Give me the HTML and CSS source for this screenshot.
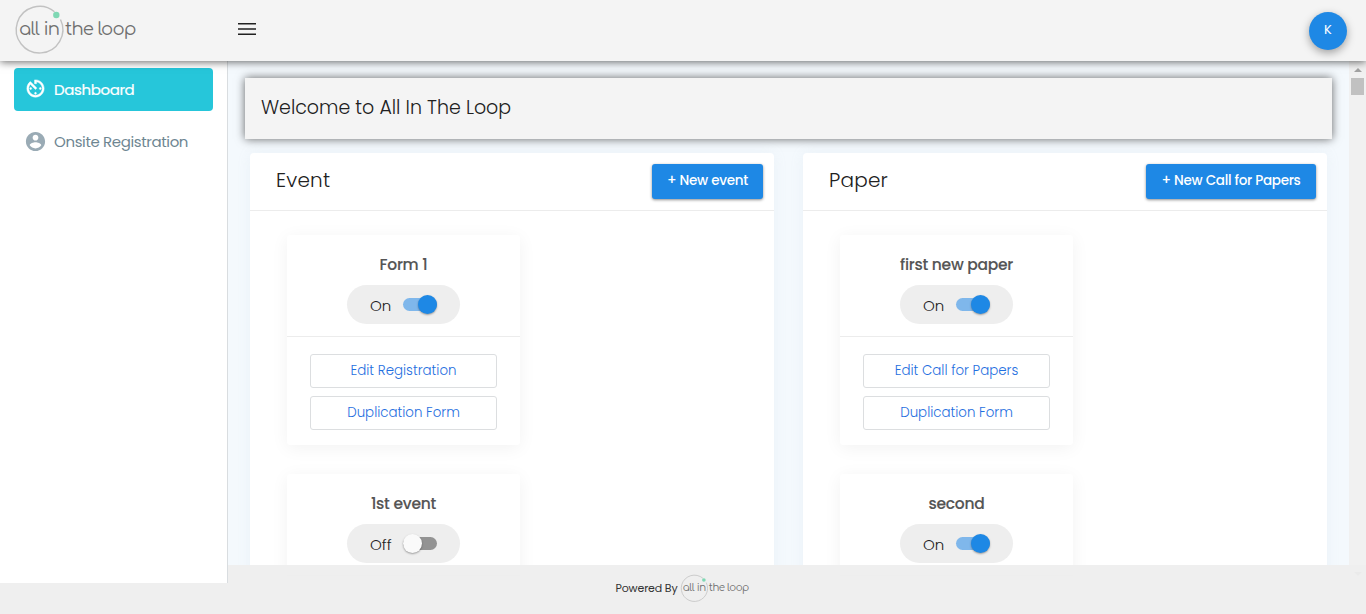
FILE: index.html
```html
<!DOCTYPE html>
<html lang="en">
<head>
<meta charset="utf-8">
<title>All In The Loop</title>
<link rel="stylesheet" href="styles.css">
</head>
<body>
<svg class="defs" width="0" height="0">
  <symbol id="logo" viewBox="0 0 124 50" overflow="visible">
    <path d="M40.500 6.800A23.300 23.300 0 1 0 46.500 14.500" fill="none" stroke="#c2c2c2" stroke-width="1.400"/>
    <circle cx="42.300" cy="10" r="3.200" fill="#7fd8b4"/>
    <g class="logo-text">
      <text x="5" y="30" textLength="41">all in</text>
      <text x="51" y="30" textLength="71.500">the loop</text>
    </g>
  </symbol>
</svg>
<div class="app">
  <header class="topbar">
    <svg class="logo"><use href="#logo"/></svg>
    <svg class="menu" viewBox="0 0 18 12"><path d="M0 .75h18M0 6h18M0 11.250h18"/></svg>
    <div class="avatar">K</div>
  </header>
  <div class="body">
    <nav class="sidebar">
      <a class="nav active">
        <svg viewBox="0 0 24 24"><path d="M11 3v4h2V5.080c3.390.49 6 3.390 6 6.920 0 3.870-3.130 7-7 7s-7-3.130-7-7c0-1.680.59-3.220 1.580-4.420L12 13l1.410-1.410-6.800-6.800v.02C4.420 6.450 3 9.050 3 12c0 4.970 4.020 9 9 9 4.970 0 9-4.030 9-9s-4.030-9-9-9h-1zm7 9c0-.55-.45-1-1-1s-1 .45-1 1 .45 1 1 1 1-.45 1-1zM6 12c0 .55.45 1 1 1s1-.45 1-1-.45-1-1-1-1 .45-1 1zm5 5c0 .55.450 1 1 1s1-.45 1-1-.45-1-1-1-1 .45-1 1z"/></svg>
        <span>Dashboard</span></a>
      <a class="nav">
        <svg viewBox="0 0 24 24"><path d="M12 2C6.480 2 2 6.480 2 12s4.480 10 10 10 10-4.480 10-10S17.520 2 12 2zm0 3c1.660 0 3 1.340 3 3s-1.340 3-3 3-3-1.340-3-3 1.340-3 3-3zm0 14.200c-2.500 0-4.710-1.280-6-3.220.03-1.990 4-3.080 6-3.080 1.990 0 5.970 1.090 6 3.080-1.290 1.940-3.500 3.220-6 3.220z"/></svg>
        <span>Onsite Registration</span></a>
    </nav>
    <main class="content">
      <h1 class="welcome"><span>Welcome to All In The Loop</span></h1>
      <div class="panels">
        <section class="panel">
          <div class="panel-head"><h2>Event</h2><button class="primary new-event">+ New event</button></div>
          <div class="cards">
            <article class="card">
              <div class="card-top"><h3>Form 1</h3><div class="pill"><span>On</span><i class="switch on"></i></div></div>
              <div class="actions"><button>Edit Registration</button><button>Duplication Form</button></div>
            </article>
            <article class="card">
              <div class="card-top"><h3>1st event</h3><div class="pill"><span>Off</span><i class="switch"></i></div></div>
              <div class="actions"></div>
            </article>
          </div>
        </section>
        <section class="panel">
          <div class="panel-head"><h2>Paper</h2><button class="primary new-paper">+ New Call for Papers</button></div>
          <div class="cards">
            <article class="card">
              <div class="card-top"><h3>first new paper</h3><div class="pill"><span>On</span><i class="switch on"></i></div></div>
              <div class="actions"><button>Edit Call for Papers</button><button>Duplication Form</button></div>
            </article>
            <article class="card">
              <div class="card-top"><h3>second</h3><div class="pill"><span>On</span><i class="switch on"></i></div></div>
              <div class="actions"></div>
            </article>
          </div>
        </section>
      </div>
    </main>
    <div class="scrollbar"><i class="up"></i><i class="thumb"></i><i class="down"></i></div>
  </div>
  <footer class="footer"><span>Powered By</span><svg class="logo-small"><use href="#logo"/></svg></footer>
</div>
</body>
</html>
```

FILE: styles.css
```css
* { box-sizing: border-box; }
body { margin: 0; font-family: Poppins, Inter, "Open Sans", sans-serif; font-weight: 300; color: #212121; background: #eee; overflow: hidden; }
h1, h2, h3 { margin: 0; font-weight: 300; }
span, h2, h3 { white-space: nowrap; }
button { font: inherit; display: flex; align-items: center; justify-content: center; padding: 0; white-space: nowrap; }
.defs { position: absolute; }
.app { position: relative; height: 614px; overflow: hidden; }

.topbar { position: relative; z-index: 5; height: 61px; background: #f4f4f4; box-shadow: 0 1px 8px rgba(0,0,0,.6); display: flex; align-items: center; padding: 0 19px 0 14px; }
.logo { width: 124px; height: 50px; margin-bottom: 2px; overflow: visible; }
.logo-text { font-family: Comfortaa, Lato, sans-serif; font-size: 18px; font-weight: 400; fill: #707070; }
.menu { width: 18px; height: 12px; margin-left: 100px; margin-bottom: 3px; stroke: #212121; stroke-width: 1.500; }
.avatar { margin-left: auto; width: 38px; height: 38px; border-radius: 50%; background: #1e88e5; color: #fff; font-size: 13px; font-weight: 400; display: flex; align-items: center; justify-content: center; padding-bottom: 2px; box-shadow: 0 3px 8px rgba(0,0,0,.35); }

.body { display: flex; height: 522px; }
.sidebar { position: relative; z-index: 3; width: 228px; background: #fff; border-right: 1px solid #d9dde0; padding: 7px 14px; display: flex; flex-direction: column; gap: 9px; }
.nav { display: flex; align-items: center; height: 43px; border-radius: 4px; padding-left: 10px; gap: 7px; font-size: 15px; font-weight: 400; letter-spacing: -.38px; color: #6e8692; }
.nav svg { width: 23px; height: 23px; fill: #9aabb5; }
.nav.active { background: #26c6da; color: #fff; -webkit-text-stroke: .2px #fff; letter-spacing: -.38px; }
.nav.active svg { fill: #fff; stroke: #fff; stroke-width: .5; margin-bottom: 2px; }

.content { width: 1121px; height: 522px; overflow: hidden; background: #f4f9fd; padding: 17px; }
.welcome { height: 61px; background: #f4f4f4; box-shadow: 0 0 9px rgba(0,0,0,.6); padding: 0 16px 2px; display: flex; align-items: center; font-size: 19px; letter-spacing: -.03px; }
.panels { display: grid; grid-template-columns: 524px 524px; gap: 29px; padding: 14px 5px 0; }
.panel { background: #fff; border-radius: 4px; height: 600px; box-shadow: 0 0 14px rgba(160,180,200,.1); }
.panel-head { height: 58px; border-bottom: 1px solid #ececec; display: flex; align-items: center; justify-content: space-between; padding: 0 11px 0 26px; }
.panel-head h2 { font-size: 20px; letter-spacing: .2px; padding-bottom: 4px; }
.primary { border: 0; height: 35px; border-radius: 3px; background: #1e88e5; color: #fff; font-size: 13.500px; font-weight: 500; letter-spacing: -.28px; padding-bottom: 2px; box-shadow: 0 1px 3px rgba(0,0,0,.45); }
.new-event { width: 111px; }
.new-paper { width: 170px; }
.cards { padding: 24px 37px; display: grid; gap: 29px; }
.card { width: 233px; height: 210px; border-radius: 3px; background: #fff; box-shadow: 0 3px 18px rgba(0,0,0,.055); }
.card-top { height: 102px; border-bottom: 1px solid #ececec; display: flex; flex-direction: column; align-items: center; padding-top: 18px; }
.card h3 { font-size: 15.500px; line-height: 24px; font-weight: 500; letter-spacing: -.25px; color: #555; -webkit-text-stroke: .1px #555; }
.pill { margin-top: 8px; width: 113px; height: 39px; border-radius: 20px; background: #eee; display: flex; align-items: center; justify-content: space-between; padding: 1px 23px 0 23px; font-size: 15px; }
.switch { position: relative; width: 34px; height: 13px; border-radius: 7px; background: #939393; margin-bottom: 2px; }
.switch::after { content: ""; position: absolute; left: 0; top: -3px; width: 19px; height: 19px; border-radius: 50%; background: #fafafa; box-shadow: 0 1px 2px rgba(0,0,0,.35); }
.switch.on { background: #7fb7eb; }
.switch.on::after { left: auto; right: 0; background: #1e88e5; }
.actions { padding: 17px 23px; display: grid; gap: 8px; }
.actions button { height: 34px; border: 1px solid #dcdee0; border-radius: 3px; background: #fff; color: #1f6fe0; font-size: 13.400px; padding-bottom: 1px; font-weight: 300; }

.scrollbar { width: 17px; background: #f1f1f1; display: flex; flex-direction: column; align-items: center; }
.scrollbar i { display: block; }
.up { margin-top: 7px; border: 4px solid transparent; border-top: 0; border-bottom: 4px solid #a3a3a3; }
.thumb { margin-top: 6px; width: 13px; height: 17px; background: #c1c1c1; }
.down { margin-top: auto; margin-bottom: 7px; border: 4px solid transparent; border-bottom: 0; border-top: 4px solid #a3a3a3; }
.footer { position: absolute; z-index: 2; left: 0; right: 0; bottom: 0; height: 49px; background: rgba(238,238,238,.95); display: flex; align-items: center; justify-content: center; gap: 3px; font-size: 11px; font-weight: 400; letter-spacing: -.15px; color: #333; padding-bottom: 2px; }
.logo-small { width: 70px; height: 29px; overflow: visible; }
```
